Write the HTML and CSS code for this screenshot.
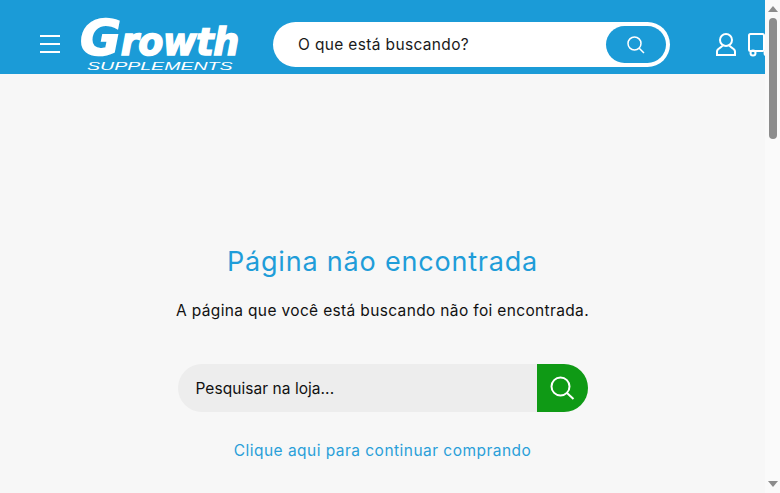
FILE: index.html
```html
<!DOCTYPE html>
<html lang="pt-BR">
<head>
<meta charset="utf-8">
<title>Growth Supplements</title>
<link rel="stylesheet" href="styles.css">
</head>
<body>
<div class="app">
  <div class="page">
    <header class="header">
      <div class="burger"><i></i><i></i><i></i></div>
      <div class="logo">
        <div class="logo-main"><span class="logo-g">G</span>rowth</div>
        <div class="logo-sub">SUPPLEMENTS</div>
      </div>
      <div class="top-search">
        <span class="top-search-text">O que está buscando?</span>
        <span class="top-search-btn">
          <svg width="20" height="20" viewBox="0 0 20 20" fill="none" stroke="#fff" stroke-width="1.5"><circle cx="8.500" cy="8.500" r="6.500"/><path d="M13.200 13.200 18 18"/></svg>
        </span>
      </div>
      <svg class="user" width="22" height="23" viewBox="0 0 22 23" fill="none" stroke="#fff" stroke-width="2"><circle cx="11" cy="7" r="6"/><path d="M7.500 12.500c-.5 2-5.500 2.500-5.500 6V22h18v-3.500c0-3.500-5-4-5.500-6"/></svg>
      <svg class="cart" width="24" height="24" viewBox="0 0 24 24" fill="none" stroke="#fff" stroke-width="2"><rect x="1" y="1" width="15" height="17" rx="1.500"/><path d="M16 8h8"/><circle cx="5" cy="20" r="2.500"/><circle cx="19" cy="20" r="2.500"/></svg>
    </header>
    <main class="main">
      <h1 class="title">Página não encontrada</h1>
      <p class="lead">A página que você está buscando não foi encontrada.</p>
      <div class="store-search">
        <span class="store-search-text">Pesquisar na loja...</span>
        <span class="store-search-btn">
          <svg width="26" height="26" viewBox="0 0 26 26" fill="none" stroke="#fff" stroke-width="2"><circle cx="11.500" cy="11.500" r="9"/><path d="M18 18l6.500 6"/></svg>
        </span>
      </div>
      <a class="link" href="#">Clique aqui para continuar comprando</a>
    </main>
  </div>
  <div class="scrollbar">
    <span class="arrow-up"></span>
    <span class="thumb"></span>
    <span class="arrow-down"></span>
  </div>
</div>
</body>
</html>
```

FILE: styles.css
```css
* { box-sizing: border-box; }
html, body { margin: 0; height: 100%; overflow: hidden; }
body { font-family: "Inter", "Liberation Sans", sans-serif; color: #111; }
.app { display: flex; height: 493px; }
.page { width: 765px; display: flex; flex-direction: column; overflow: hidden; }

.header {
  height: 74px; flex: none; background: #1b9bd7;
  display: flex; align-items: center; padding: 15px 0 0 40px;
}
.burger { width: 20px; display: flex; flex-direction: column; gap: 6px; flex: none; margin-top: -1px; }
.burger i { display: block; height: 2px; background: #fff; }

.logo { margin-left: 20px; width: 158px; flex: none; color: #fff; margin-top: 2px; }
.logo-main {
  font-family: "DejaVu Sans", sans-serif; font-weight: 700; font-style: italic;
  font-size: 36.500px; line-height: 38px; height: 38px; letter-spacing: -0.400px;
  -webkit-text-stroke: 1.500px #fff; white-space: nowrap;
}
.logo-g { font-size: 50px; }
.logo-sub {
  font-family: "Liberation Sans", sans-serif; font-style: italic; font-size: 11.500px;
  line-height: 12px; width: 80px; margin: 3px 0 0 7px; white-space: nowrap;
  transform: scaleX(1.700); transform-origin: left center;
}

.top-search {
  margin-left: 35px; width: 397px; height: 45px; flex: none;
  background: #fff; border-radius: 23px;
  display: flex; align-items: center; justify-content: space-between;
  padding: 0 4px 0 25px;
}
.top-search-text { font-size: 15.500px; letter-spacing: 0.350px; color: #1a1a1a; }
.top-search-btn {
  width: 60px; height: 37px; border-radius: 19px; background: #1b9bd7;
  display: flex; align-items: center; justify-content: center;
}
.user { margin-left: 45px; flex: none; }
.cart { margin-left: 11px; flex: none; }

.main {
  flex: 1; background: #f7f7f7; display: flex; flex-direction: column;
  align-items: center; padding-top: 170px;
}
.title { margin: 0; font-size: 27px; line-height: 36px; font-weight: 400; letter-spacing: 0.800px; color: #1f9dd9; }
.lead { margin: 20px 0 0; font-size: 15.500px; line-height: 22px; letter-spacing: 0.350px; color: #111; }
.store-search {
  margin-top: 42px; width: 410px; height: 48px; flex: none;
  background: #ededed; border-radius: 24px; overflow: hidden;
  display: flex; align-items: center; justify-content: space-between; padding-left: 18px;
}
.store-search-text { font-size: 15.500px; letter-spacing: 0.050px; color: #111; }
.store-search-btn {
  width: 51px; height: 48px; background: #0f9a15;
  display: flex; align-items: center; justify-content: center;
}
.link { margin-top: 28px; font-size: 15.500px; line-height: 22px; letter-spacing: 0.470px; color: #2a9fd9; text-decoration: none; }

.scrollbar {
  width: 15px; flex: none; background: #fafafa;
  display: flex; flex-direction: column; align-items: center; padding: 6px 0;
}
.arrow-up { width: 0; height: 0; border: 5px solid transparent; border-top: 0; border-bottom: 6px solid #8c8c8c; }
.thumb { width: 8px; height: 121px; margin-top: 6px; border-radius: 4px; background: #8c8c8c; }
.arrow-down { width: 0; height: 0; margin-top: auto; border: 5px solid transparent; border-bottom: 0; border-top: 6px solid #8c8c8c; }
```
